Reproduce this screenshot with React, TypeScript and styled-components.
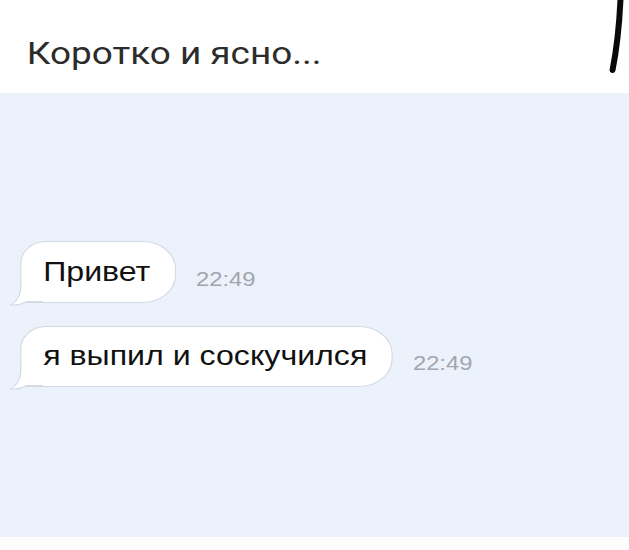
import React from "react";
import styled, { createGlobalStyle } from "styled-components";

/* The reference screenshot is horizontally stretched by ~1.19,
   so the page is laid out at 629/1.19 px wide and stretched back. */
const STRETCH = 1.19;
const BASE_W = 629 / STRETCH;

const Global = createGlobalStyle`
  html, body { margin: 0; padding: 0; background: #fdfdfd; }
  body { width: 629px; height: 550px; overflow: hidden; }
`;

const Page = styled.div`
  width: ${BASE_W}px;
  height: 550px;
  display: flex;
  flex-direction: column;
  background: #fdfdfd;
  transform: scaleX(${STRETCH});
  transform-origin: 0 0;
`;

const Header = styled.header`
  position: relative;
  height: 93px;
  box-sizing: border-box;
  padding: 38px 0 0 22.5px;
  background: #ffffff;
  flex: none;
`;

const Title = styled.h1`
  margin: 0;
  font-family: Roboto, "Noto Sans", sans-serif;
  font-weight: 400;
  font-size: 31px;
  line-height: 31px;
  color: #2c2c2c;
`;

const Scribble = styled.svg`
  position: absolute;
  right: 0;
  top: 0;
`;

const Chat = styled.main`
  height: 444px;
  flex: none;
  box-sizing: border-box;
  background: #ebf2fc;
  padding: 148px 0 0 16.8px;
  display: flex;
  flex-direction: column;
  gap: 23px;
`;

const Row = styled.div`
  display: flex;
  align-items: center;
  gap: 16.8px;
`;

const Bubble = styled.div<{ $h: number }>`
  position: relative;
  height: ${(p) => p.$h}px;
  box-sizing: border-box;
  display: flex;
  align-items: center;
  padding: 0 20.5px 0 18.5px;
  background: #ffffff;
  border: 1px solid #d5dae2;
  border-radius: 22px 28px 28px 0;
  font-family: "Liberation Sans", Arial, sans-serif;
  font-size: 27px;
  line-height: 27px;
  color: #111111;
`;

const Tail = styled.svg`
  position: absolute;
  left: -10px;
  bottom: -5px;
  overflow: visible;
`;

const Time = styled.span`
  margin-top: 14px;
  font-family: "Liberation Sans", Arial, sans-serif;
  font-size: 20px;
  color: #a2a6ad;
`;

const BubbleTail = () => (
  <Tail width="28" height="26" viewBox="0 0 28 26">
    <path
      d="M9.5,0 L9.5,6 C9.5,14 6,21 1,24 C7,24.5 11,23 14.5,20.5 L28,20.5 L28,0 Z"
      fill="#ffffff"
    />
    <path
      d="M9.5,0 L9.5,6 C9.5,14 6,21 1,24 C7,24.5 11,23 14.5,20.5 L28,20.5"
      fill="none"
      stroke="#d5dae2"
      strokeWidth="1"
    />
  </Tail>
);

const messages = [
  { text: "Привет", time: "22:49", h: 62 },
  { text: "я выпил и соскучился", time: "22:49", h: 61 },
];

export default function App() {
  return (
    <>
      <Global />
      <Page>
        <Header>
          <Title>Коротко и ясно...</Title>
          <Scribble
            width={30 / STRETCH}
            height="80"
            viewBox="0 0 30 80"
            preserveAspectRatio="none"
          >
            <path
              d="M22,-2 C21,20 19,45 14,70"
              stroke="#0a0a0a"
              strokeWidth="6"
              strokeLinecap="round"
              fill="none"
            />
          </Scribble>
        </Header>
        <Chat>
          {messages.map((m, i) => (
            <Row key={i}>
              <Bubble $h={m.h}>
                <BubbleTail />
                {m.text}
              </Bubble>
              <Time>{m.time}</Time>
            </Row>
          ))}
        </Chat>
      </Page>
    </>
  );
}
